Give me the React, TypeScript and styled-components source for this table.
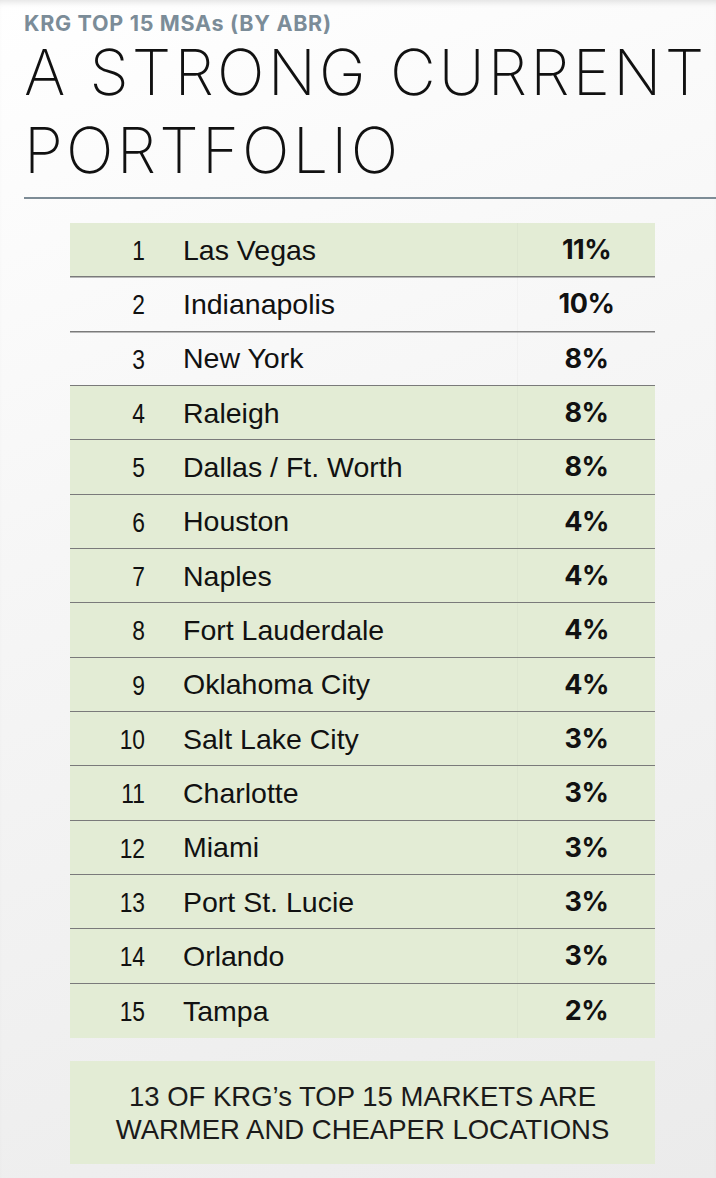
import React from "react";
import styled, { createGlobalStyle } from "styled-components";

const Global = createGlobalStyle`
  html, body { margin: 0; padding: 0; }
  body { background: #f2f2f2; }
  * { box-sizing: border-box; }
`;

const Page = styled.div`
  width: 716px;
  min-height: 1178px;
  background: linear-gradient(160deg, #ffffff 0%, #f6f6f6 40%, #ebebeb 100%);
  box-shadow: inset 0 6px 6px -4px rgba(0, 0, 0, 0.12);
  padding: 13px 0 0 24px;
  overflow: hidden;
`;

const Kicker = styled.div`
  font-family: Inter, "Liberation Sans", sans-serif;
  font-weight: 700;
  font-size: 21.5px;
  line-height: 20px;
  color: #7b8c98;
  letter-spacing: 0.7px;
`;

const Title = styled.h1`
  margin: 0;
  font-family: Inter, "Liberation Sans", sans-serif;
  font-weight: 200;
  font-size: 63px;
  line-height: 78px;
  letter-spacing: 3.2px;
  color: #111;
  white-space: nowrap;
`;

const Rule = styled.div`
  height: 2px;
  background: #7d8c96;
  margin-top: 8px;
`;

const Content = styled.div`
  width: 585px;
  margin: 24px 0 0 46px;
  display: flex;
  flex-direction: column;
  gap: 23px;
`;

const Table = styled.div`
  display: flex;
  flex-direction: column;
`;

const Row = styled.div<{ $shaded: boolean }>`
  display: grid;
  grid-template-columns: 75px 1fr 138px;
  align-items: center;
  height: 54.33px;
  background: ${(p) => (p.$shaded ? "#e3ecd5" : "transparent")};
  border-bottom: 1px solid #7a7a7a;
  box-shadow: 0 1px 0 #b9b9b9;
  position: relative;
  &:last-child {
    border-bottom: none;
    box-shadow: none;
  }
`;

const Rank = styled.div`
  font-family: "Liberation Sans", Arial, sans-serif;
  font-size: 28.5px;
  color: #111;
  text-align: right;
  padding-top: 2px;
  transform: scaleX(0.8);
  transform-origin: right center;
`;

const Name = styled.div`
  font-family: "Liberation Sans", Arial, sans-serif;
  font-size: 28.5px;
  color: #111;
  padding-left: 38px;
  padding-top: 1px;
`;

const Pct = styled.div`
  height: 100%;
  display: flex;
  align-items: center;
  justify-content: center;
  border-left: 1px solid rgba(0, 0, 0, 0.025);
  font-family: Inter, "Liberation Sans", sans-serif;
  font-weight: 700;
  font-size: 27px;
  color: #111;
  letter-spacing: -0.5px;
`;

const Note = styled.div`
  background: #e3ecd5;
  height: 103px;
  display: flex;
  flex-direction: column;
  align-items: center;
  justify-content: center;
  font-family: "Liberation Sans", Arial, sans-serif;
  font-size: 27.5px;
  line-height: 33px;
  color: #1a1a1a;
  text-align: center;
  padding-top: 2px;
`;

const rows: [number, string, string][] = [
  [1, "Las Vegas", "11%"],
  [2, "Indianapolis", "10%"],
  [3, "New York", "8%"],
  [4, "Raleigh", "8%"],
  [5, "Dallas / Ft. Worth", "8%"],
  [6, "Houston", "4%"],
  [7, "Naples", "4%"],
  [8, "Fort Lauderdale", "4%"],
  [9, "Oklahoma City", "4%"],
  [10, "Salt Lake City", "3%"],
  [11, "Charlotte", "3%"],
  [12, "Miami", "3%"],
  [13, "Port St. Lucie", "3%"],
  [14, "Orlando", "3%"],
  [15, "Tampa", "2%"],
];

export default function App() {
  return (
    <>
      <Global />
      <Page>
        <Kicker>KRG TOP 15 MSAs (BY ABR)</Kicker>
        <Title>
          A STRONG CURRENT
          <br />
          PORTFOLIO
        </Title>
        <Rule />
        <Content>
          <Table>
            {rows.map(([n, name, pct]) => (
              <Row key={n} $shaded={n !== 2 && n !== 3}>
                <Rank>{n}</Rank>
                <Name>{name}</Name>
                <Pct>{pct}</Pct>
              </Row>
            ))}
          </Table>
          <Note>
            <div>13 OF KRG’s TOP 15 MARKETS ARE</div>
            <div>WARMER AND CHEAPER LOCATIONS</div>
          </Note>
        </Content>
      </Page>
    </>
  );
}
